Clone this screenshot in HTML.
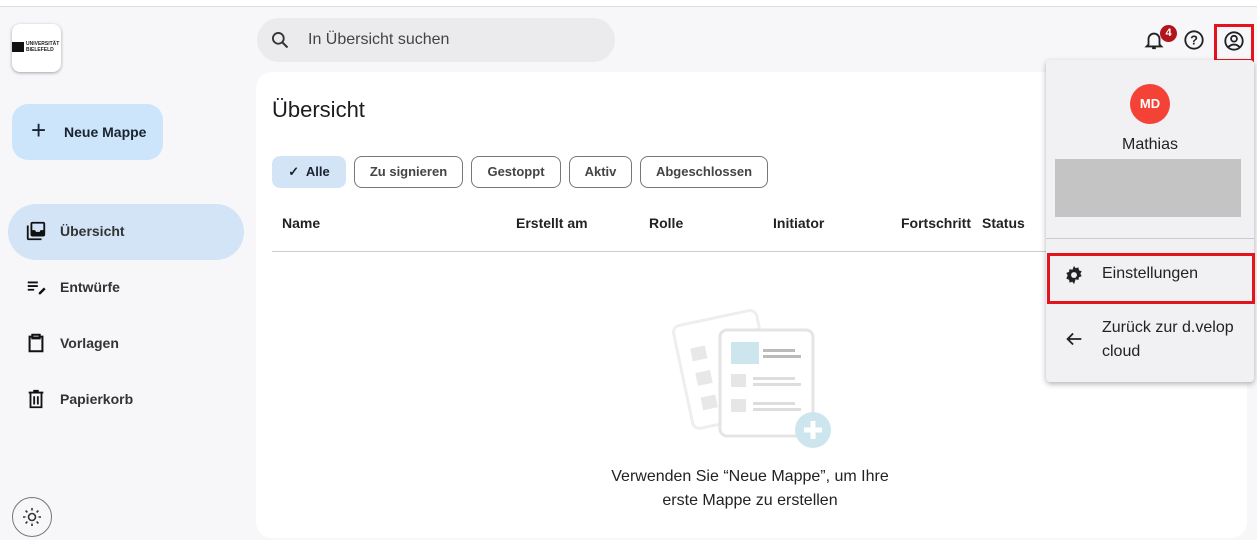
<!DOCTYPE html>
<html><head><meta charset="utf-8"><style>
*{box-sizing:border-box;margin:0;padding:0}
body{width:1257px;height:540px;overflow:hidden;background:#f7f7fa;font-family:"Liberation Sans",sans-serif;color:#1d1b20;position:relative}
.abs{position:absolute}
.top{left:0;top:0;width:1257px;height:7px;background:#fff;border-bottom:1px solid #dedede}
.logo{left:12px;top:24px;width:49px;height:48px;background:#fff;border-radius:8px;box-shadow:0 1px 3px rgba(0,0,0,.35)}
.fab{left:12px;top:104px;width:151px;height:56px;background:#cce5fb;border-radius:16px;font-size:14px;font-weight:bold;color:#1a2330}
.nav{left:8px;width:236px;height:56px;border-radius:28px;font-size:14px;font-weight:bold;color:#333}
.nav span{position:absolute;left:52px;top:19px}
.nav svg{position:absolute;left:17px;top:16px}
.search{left:257px;top:18px;width:358px;height:44px;background:#ebebee;border-radius:22px;font-size:16px;color:#444}
.card{left:256px;top:72px;width:991px;height:466px;background:#fff;border-radius:16px}
.chip{top:156px;height:32px;border:1px solid #777;border-radius:8px;font-size:13px;font-weight:bold;color:#444;line-height:30px;text-align:center}
.th{top:215px;font-size:14px;font-weight:bold;color:#222}
.menu{left:1046px;top:60px;width:208px;height:322px;background:#f1f0f3;border-radius:4px;box-shadow:0 2px 6px rgba(0,0,0,.3)}
.red{border:3px solid #e3141e}
</style></head><body>
<div class="abs top"></div>
<div class="abs logo"><div class="abs" style="left:0;top:18px;width:12px;height:10px;background:#111"></div><div class="abs" style="left:14px;top:17px;font-size:5px;font-weight:bold;line-height:6px;color:#222">UNIVERSITÄT<br>BIELEFELD</div></div>
<div class="abs fab"><span class="abs" style="left:19px;top:13px;font-size:26px;font-weight:normal;line-height:26px">+</span><span class="abs" style="left:52px;top:20px">Neue Mappe</span></div>
<div class="abs nav" style="top:204px;background:#d3e4f7"><svg width="22" height="22" viewBox="0 0 24 24"><path d="M4 6H2v14c0 1.1.9 2 2 2h14v-2H4V6zm16-4H8c-1.1 0-2 .9-2 2v12c0 1.1.9 2 2 2h12c1.1 0 2-.9 2-2V4c0-1.1-.9-2-2-2zm0 9h-3l-1 2h-4l-1-2H8V4h12v7z" fill="#111"/></svg><span>Übersicht</span></div>
<div class="abs nav" style="top:260px"><svg width="22" height="22" viewBox="0 0 24 24"><path d="M3 10h11v2H3zm0-4h11v2H3zm0 8h7v2H3zm17.6-1.5l-5.6 5.6V20h1.9l5.6-5.6z" fill="#111"/></svg><span>Entwürfe</span></div>
<div class="abs nav" style="top:316px"><svg width="22" height="22" viewBox="0 0 24 24"><path d="M8 3h8v3H8zM5 5h3v2h8V5h3v16H5z" fill="none" stroke="#111" stroke-width="2.2"/></svg><span>Vorlagen</span></div>
<div class="abs nav" style="top:372px"><svg width="22" height="22" viewBox="0 0 24 24"><path d="M4 5h16M9 3h6M6 5v16h12V5M10 9v9M14 9v9" fill="none" stroke="#111" stroke-width="2"/></svg><span>Papierkorb</span></div>
<div class="abs" style="left:12px;top:497px;width:40px;height:40px;border:1px solid #777;border-radius:50%"><svg class="abs" style="left:9px;top:9px" width="20" height="20" viewBox="0 0 20 20" fill="none" stroke="#333" stroke-width="1.6"><circle cx="10" cy="10" r="3.5"/><path d="M10 1v2.5M10 16.5V19M1 10h2.5M16.5 10H19M3.6 3.6l1.8 1.8M14.6 14.6l1.8 1.8M3.6 16.4l1.8-1.8M14.6 5.4l1.8-1.8"/></svg></div>
<div class="abs search"><svg class="abs" style="left:13px;top:12px" width="20" height="20" viewBox="0 0 24 24"><circle cx="10" cy="10" r="6.5" fill="none" stroke="#333" stroke-width="2.2"/><path d="M15 15l6 6" stroke="#333" stroke-width="2.4"/></svg><span class="abs" style="left:51px;top:13px">In Übersicht suchen</span></div>
<div class="abs card"></div>
<div class="abs" style="left:272px;top:97px;font-size:22px;color:#1d1b20">Übersicht</div>
<div class="abs chip" style="left:272px;width:74px;background:#d3e4f7;border-color:#d3e4f7;color:#1a2330">✓&nbsp; Alle</div>
<div class="abs chip" style="left:354px;width:109px">Zu signieren</div>
<div class="abs chip" style="left:471px;width:90px">Gestoppt</div>
<div class="abs chip" style="left:569px;width:63px">Aktiv</div>
<div class="abs chip" style="left:640px;width:128px">Abgeschlossen</div>
<div class="abs th" style="left:282px">Name</div><div class="abs th" style="left:516px">Erstellt am</div><div class="abs th" style="left:649px">Rolle</div><div class="abs th" style="left:773px">Initiator</div><div class="abs th" style="left:901px">Fortschritt</div><div class="abs th" style="left:982px">Status</div>
<div class="abs" style="left:272px;top:251px;width:780px;height:1px;background:#ccc"></div>
<svg class="abs" style="left:660px;top:290px" width="190" height="170" viewBox="0 0 190 170">
<g transform="rotate(-12 50 80)"><rect x="22" y="30" width="85" height="105" rx="7" fill="#fff" stroke="#eee" stroke-width="3"/><rect x="35" y="55" width="15" height="13" fill="#e8e8e8"/><rect x="35" y="80" width="15" height="13" fill="#e8e8e8"/><rect x="35" y="105" width="15" height="13" fill="#e8e8e8"/></g>
<rect x="60" y="40" width="93" height="106" rx="7" fill="#fff" stroke="#e4e4e4" stroke-width="3"/>
<rect x="71" y="52" width="28" height="22" fill="#cde6ee"/><rect x="103" y="59" width="32" height="3" fill="#bbb"/><rect x="103" y="65" width="38" height="3" fill="#bbb"/>
<rect x="71" y="84" width="15" height="13" fill="#e6e6e6"/><rect x="93" y="87" width="42" height="3" fill="#ddd"/><rect x="93" y="93" width="48" height="3" fill="#ddd"/>
<rect x="71" y="109" width="15" height="13" fill="#e6e6e6"/><rect x="93" y="112" width="42" height="3" fill="#ddd"/><rect x="93" y="118" width="48" height="3" fill="#ddd"/>
<circle cx="153" cy="140" r="18" fill="#cde6ee"/><path d="M153 131v18M144 140h18" stroke="#fff" stroke-width="5"/></svg>
<div class="abs" style="left:560px;top:465px;width:380px;text-align:center;font-size:16px;line-height:24px;color:#222">Verwenden Sie “Neue Mappe”, um Ihre<br>erste Mappe zu erstellen</div>
<svg class="abs" style="left:1143px;top:29px" width="22" height="22" viewBox="0 0 24 24"><path d="M6 17V11a6 6 0 0112 0v6l2 2H4zM10 21h4" fill="none" stroke="#222" stroke-width="2"/></svg>
<div class="abs" style="left:1160px;top:25px;width:17px;height:17px;border-radius:50%;background:#b3141c;color:#fff;font-size:11px;font-weight:bold;text-align:center;line-height:17px">4</div>
<svg class="abs" style="left:1183px;top:29px" width="22" height="22" viewBox="0 0 24 24"><circle cx="12" cy="12" r="9.5" fill="none" stroke="#222" stroke-width="2"/><text x="12" y="17" font-size="14" font-weight="bold" text-anchor="middle" fill="#222" font-family="Liberation Sans">?</text></svg>
<div class="abs red" style="left:1214px;top:24px;width:40px;height:38px"></div>
<svg class="abs" style="left:1223px;top:30px" width="22" height="22" viewBox="0 0 24 24" fill="none" stroke="#222" stroke-width="2"><circle cx="12" cy="12" r="9.5"/><circle cx="12" cy="9.5" r="3.2"/><path d="M6 18.5c3.5-3.5 8.5-3.5 12 0"/></svg>
<div class="abs menu">
<div class="abs" style="left:84px;top:24px;width:40px;height:40px;border-radius:50%;background:#f44336;color:#fff;font-size:13px;font-weight:bold;text-align:center;line-height:40px">MD</div>
<div class="abs" style="left:0;top:76px;width:208px;text-align:center;font-size:16px;color:#222">Mathias</div>
<div class="abs" style="left:9px;top:99px;width:186px;height:58px;background:#c4c4c4"></div>
<div class="abs" style="left:0;top:178px;width:208px;height:1px;background:#c8ccd2"></div>
<svg class="abs" style="left:17px;top:204px" width="22" height="22" viewBox="0 0 24 24"><path d="M12 2l1.8 2.6 3-.9.6 3.1 3 1.2-1.5 2.6 1.5 2.6-3 1.2-.6 3.1-3-.9L12 22l-1.8-2.6-3 .9-.6-3.1-3-1.2L5.1 12.4 3.6 9.8l3-1.2.6-3.1 3 .9z" fill="#222"/><circle cx="12" cy="12" r="3.2" fill="#f1f0f3"/></svg>
<div class="abs" style="left:56px;top:205px;font-size:16px;color:#222">Einstellungen</div>
<svg class="abs" style="left:17px;top:268px" width="22" height="22" viewBox="0 0 24 24" fill="none" stroke="#222" stroke-width="2"><path d="M20 12H5M11 6l-6 6 6 6"/></svg>
<div class="abs" style="left:56px;top:256px;font-size:16px;line-height:24px;color:#222">Zurück zur d.velop<br>cloud</div>
</div>
<div class="abs red" style="left:1047px;top:253px;width:208px;height:51px"></div>
</body></html>
